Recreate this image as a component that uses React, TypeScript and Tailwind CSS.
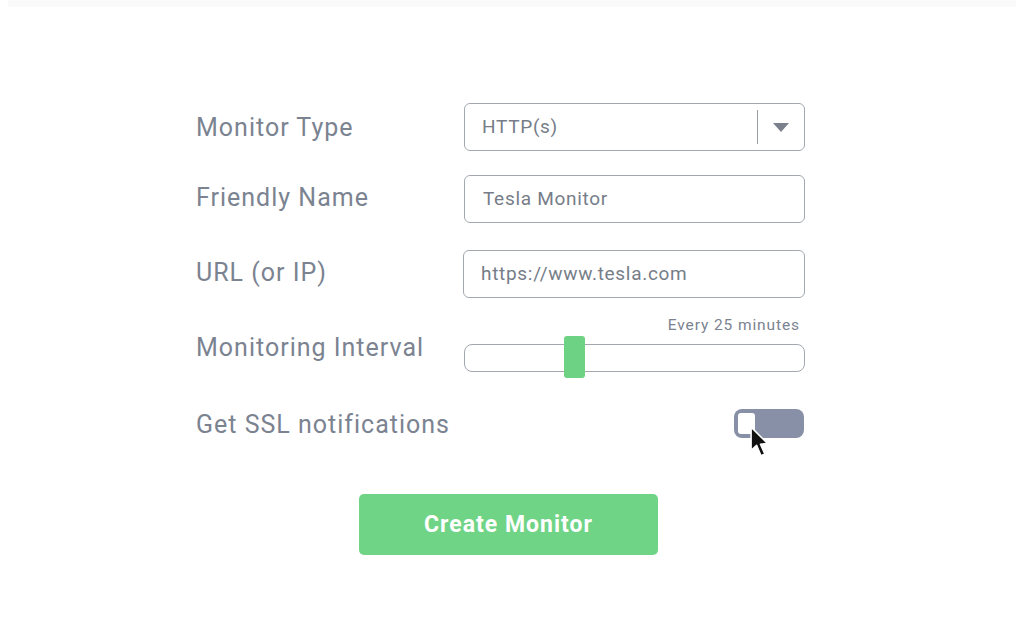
import React from "react";

const labelCls = "w-[268px] shrink-0 text-[25px] tracking-[1px] text-[#7b8391] leading-none";
const boxCls = "w-[341px] h-[48px] rounded-[6px] border-[1.5px] border-[#a3a8b0] bg-white flex items-center text-[19px] tracking-[0.7px] text-[#767d88]";

export default function App() {
  return (
    <div className="w-[1024px] h-[641px] bg-white relative overflow-hidden" style={{ fontFamily: "Roboto, 'Noto Sans', sans-serif" }}>
      <div className="mx-[8px] h-[7px] bg-[#fafafa]" />
      <div className="pl-[196px] pt-[96px] flex flex-col">
        {/* Monitor Type */}
        <div className="flex items-center h-[48px]">
          <div className={labelCls}>Monitor Type</div>
          <div className={boxCls + " pl-[17px]"}>
            <span className="flex-1">HTTP(s)</span>
            <div className="w-[1.5px] h-[34px] bg-[#9aa0a8]" />
            <div className="w-[46px] flex justify-center">
              <svg width="16" height="9" viewBox="0 0 16 9"><path d="M0 0 L16 0 L8 9 Z" fill="#7a818c" /></svg>
            </div>
          </div>
        </div>
        {/* Friendly Name */}
        <div className="flex items-center h-[48px] mt-[24px]">
          <div className={labelCls + " -mt-[4px]"}>Friendly Name</div>
          <div className={boxCls + " pl-[18px]"}>Tesla Monitor</div>
        </div>
        {/* URL */}
        <div className="flex items-center h-[48px] mt-[27px]">
          <div className={labelCls + " -mt-[3px]"}>URL (or IP)</div>
          <div className={boxCls + " pl-[17px] -ml-[1px] w-[342px]"}>https://www.tesla.com</div>
        </div>
        {/* Interval */}
        <div className="flex mt-[20px]">
          <div className={labelCls + " mt-[17px]"}>Monitoring Interval</div>
          <div className="w-[341px] flex flex-col">
            <div className="text-right text-[15.5px] text-[#7b8391] pr-[5px] leading-none tracking-[0.9px]">Every 25 minutes</div>
            <div className="relative mt-[10px] h-[28px] rounded-[8px] border-[1.5px] border-[#a3a8b0] bg-white">
              <div className="absolute left-[99px] -top-[9px] w-[21px] h-[42px] rounded-[3px] bg-[#6dd283]" />
            </div>
          </div>
        </div>
        {/* SSL */}
        <div className="flex items-center mt-[37px] h-[30px]">
          <div className={labelCls + " mt-[1px]"}>Get SSL notifications</div>
          <div className="w-[341px] flex justify-end pr-[1px]">
            <div className="relative w-[70px] h-[29px] rounded-[8px] bg-[#8790a6]">
              <div className="absolute left-[2px] top-[2px] w-[21px] h-[25px] rounded-[5px] bg-white border-[2px] border-[#8790a6]" />
              <svg className="absolute left-[16px] top-[17px]" width="22" height="33" viewBox="0 0 20 30">
                <path d="M1 1 L1 22 L6 17.5 L10 27 L13.5 25.5 L9.5 16.5 L16 16 Z" fill="#111" stroke="#fff" strokeWidth="1.4" strokeLinejoin="round" />
              </svg>
            </div>
          </div>
        </div>
        {/* Button */}
        <div className="pl-[163px] mt-[55px]">
          <button className="w-[299px] h-[61px] pt-[3px] rounded-[5px] bg-[#70d486] text-white text-[23px] tracking-[1px] font-bold">Create Monitor</button>
        </div>
      </div>
    </div>
  );
}
